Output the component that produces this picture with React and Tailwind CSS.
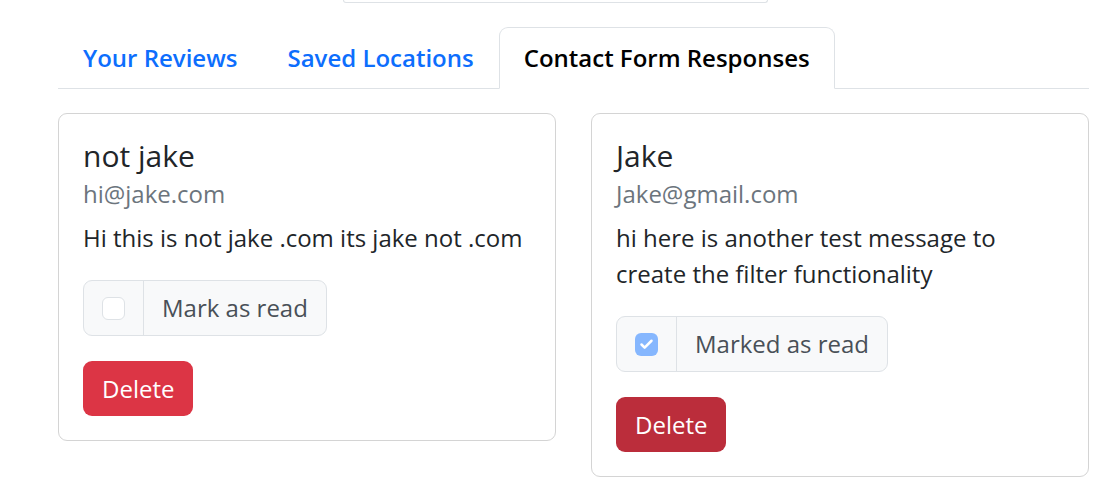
import { Check } from 'lucide-react';

const responses = [
  { name: 'not jake', email: 'hi@jake.com', message: 'Hi this is not jake .com its jake not .com', read: false, hover: false },
  { name: 'Jake', email: 'Jake@gmail.com', message: 'hi here is another test message to create the filter functionality', read: true, hover: true },
];

function ResponseCard({ name, email, message, read, hover }) {
  return (
    <div className="rounded-[9px] border border-[#d4d4d4] bg-white p-[24px]">
      <h5 className="mb-[5px] text-[30px] leading-[36px] text-[#212529]">{name}</h5>
      <h6 className="mb-[12px] text-[24px] leading-[29px] text-[#6c757d]">{email}</h6>
      <p className="mb-[24px] text-[24px] leading-[36px] text-[#212529]">{message}</p>

      <div className="flex w-fit rounded-[9px] border border-[#dee2e6] bg-[#f8f9fa]">
        <div className="flex items-center border-r border-[#dee2e6] px-[18px] py-[9px]">
          {read ? (
            <span className="flex h-[23px] w-[23px] items-center justify-center rounded-[6px] bg-[#86b7fe]">
              <Check className="h-[15px] w-[15px] text-white" strokeWidth={4} />
            </span>
          ) : (
            <span className="h-[23px] w-[23px] rounded-[6px] border border-[#dee2e6] bg-white" />
          )}
        </div>
        <div className="px-[18px] py-[9px] text-[24px] leading-[36px] text-[#495057]">
          {read ? 'Marked as read' : 'Mark as read'}
        </div>
      </div>

      <button
        className={`mt-[25px] rounded-[9px] px-[19px] py-[9px] text-[24px] leading-[37px] text-white ${hover ? 'bg-[#bb2d3b]' : 'bg-[#dc3545]'}`}
      >
        Delete
      </button>
    </div>
  );
}

export default function App() {
  return (
    <div className="min-h-[485px] bg-white font-['Open_Sans',sans-serif]">
      <div className="ml-[343px] h-[3px] w-[425px] rounded-b-[9px] border border-t-0 border-[#dee2e6]" />

      <div className="ml-[58px] mt-[24px] w-[1031px]">
        <nav className="flex border-b border-[#dee2e6]">
          <a className="-mb-px border border-transparent px-[24px] py-[12px] text-[24px] font-semibold leading-[36px] text-[#0d6efd]">Your Reviews</a>
          <a className="-mb-px border border-transparent px-[24px] py-[12px] text-[24px] font-semibold leading-[36px] text-[#0d6efd]">Saved Locations</a>
          <a className="-mb-px rounded-t-[9px] border border-[#dee2e6] border-b-white bg-white px-[24px] py-[12px] text-[24px] font-semibold leading-[36px] text-black">
            Contact Form Responses
          </a>
        </nav>

        <div className="mt-[24px] grid grid-cols-2 items-start gap-[35px]">
          {responses.map((r) => (
            <ResponseCard key={r.email} {...r} />
          ))}
        </div>
      </div>
    </div>
  );
}
